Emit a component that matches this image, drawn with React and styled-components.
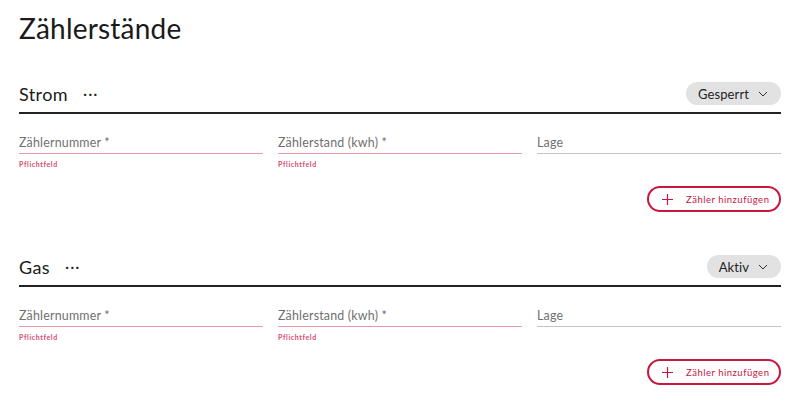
import React from 'react';
import styled, { createGlobalStyle } from 'styled-components';

const GlobalStyle = createGlobalStyle`
  body {
    margin: 0;
    background: #fff;
    font-family: Lato, 'Liberation Sans', sans-serif;
    color: #1a1a1a;
  }
`;

const Page = styled.div`
  padding: 12px 19px 0 19px;
`;

const Title = styled.h1`
  margin: 0 0 38px 0;
  font-size: 28px;
  font-weight: 400;
  line-height: 32px;
  letter-spacing: 0.2px;
`;

const Section = styled.section`
  margin-bottom: 43px;
`;

const Header = styled.div`
  display: flex;
  align-items: center;
  justify-content: space-between;
  border-bottom: 2px solid #222;
  padding-bottom: 7px;
`;

const HeaderLeft = styled.div`
  display: flex;
  align-items: center;
  gap: 15px;
`;

const SectionTitle = styled.h2`
  margin: 0;
  font-size: 18px;
  font-weight: 400;
  letter-spacing: 0.4px;
`;

const MoreButton = styled.span`
  font-size: 16px;
  letter-spacing: 1px;
  color: #222;
  line-height: 1;
  margin-top: -2px;
`;

const StatusPill = styled.button`
  display: flex;
  align-items: center;
  gap: 9px;
  height: 23px;
  padding: 0 13px 0 12px;
  border: none;
  border-radius: 12px;
  background: #e2e2e2;
  font-family: inherit;
  font-size: 13px;
  letter-spacing: 0.1px;
  color: #222;
`;

const Fields = styled.div`
  display: grid;
  grid-template-columns: repeat(3, 1fr);
  gap: 15px;
  margin-top: 21px;
`;

const Field = styled.div`
  display: flex;
  flex-direction: column;
`;

const Label = styled.div`
  font-size: 12.4px;
  color: #6f6f6f;
  padding-bottom: 3px;
  border-bottom: 1px solid ${p => (p.$required ? '#e69aac' : '#c4c4c4')};
  letter-spacing: 0.2px;
`;

const Hint = styled.div`
  font-size: 7px;
  font-weight: 700;
  color: #d64a6c;
  margin-top: 6px;
  letter-spacing: 0.6px;
  height: 9px;
`;

const Actions = styled.div`
  display: flex;
  justify-content: flex-end;
  margin-top: 17px;
`;

const AddButton = styled.button`
  display: flex;
  align-items: center;
  gap: 13px;
  height: 26px;
  width: 134px;
  padding: 0 0 0 13px;
  border: 2px solid #c8163f;
  border-radius: 14px;
  background: #fff;
  color: #c8163f;
  font-family: inherit;
  font-size: 9.5px;
  letter-spacing: 0.5px;
`;

const Chevron = () => (
  <svg width="10" height="6" viewBox="0 0 10 6" fill="none">
    <path d="M1 1l4 4 4-4" stroke="#333" strokeWidth="1" />
  </svg>
);

const Plus = () => (
  <svg width="11" height="11" viewBox="0 0 11 11" fill="none">
    <path d="M5.5 0v11M0 5.5h11" stroke="#c8163f" strokeWidth="1.2" />
  </svg>
);

const fields = [
  { label: 'Zählernummer *', required: true },
  { label: 'Zählerstand (kwh) *', required: true },
  { label: 'Lage', required: false },
];

const MeterSection = ({ name, status }) => (
  <Section>
    <Header>
      <HeaderLeft>
        <SectionTitle>{name}</SectionTitle>
        <MoreButton>···</MoreButton>
      </HeaderLeft>
      <StatusPill>
        {status}
        <Chevron />
      </StatusPill>
    </Header>
    <Fields>
      {fields.map(f => (
        <Field key={f.label}>
          <Label $required={f.required}>{f.label}</Label>
          <Hint>{f.required ? 'Pflichtfeld' : ''}</Hint>
        </Field>
      ))}
    </Fields>
    <Actions>
      <AddButton>
        <Plus />
        Zähler hinzufügen
      </AddButton>
    </Actions>
  </Section>
);

export default function App() {
  return (
    <>
      <GlobalStyle />
      <Page>
        <Title>Zählerstände</Title>
        <MeterSection name="Strom" status="Gesperrt" />
        <MeterSection name="Gas" status="Aktiv" />
      </Page>
    </>
  );
}
